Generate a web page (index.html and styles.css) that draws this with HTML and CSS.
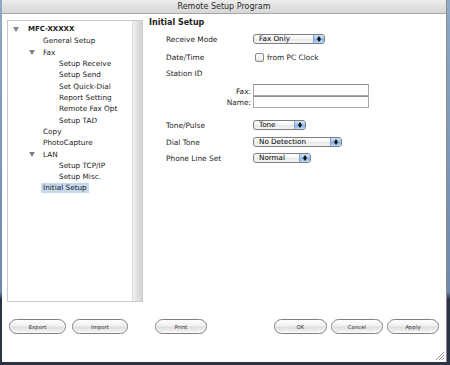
FILE: index.html
```html
<!DOCTYPE html>
<html lang="en">
<head>
  <meta charset="UTF-8" />
  <title>Remote Setup Program</title>
  <link rel="stylesheet" href="styles.css">
</head>
<body>

  <div class="window">
    <div class="titlebar">Remote Setup Program</div>

    <div class="content">
      <div class="tree">
        <div class="tree-list">
          <div class="node l0 bold"><span class="toggle"></span>MFC-XXXXX</div>
          <div class="node l1">General Setup</div>
          <div class="node l1 open"><span class="toggle"></span>Fax</div>
          <div class="node l2">Setup Receive</div>
          <div class="node l2">Setup Send</div>
          <div class="node l2">Set Quick-Dial</div>
          <div class="node l2">Report Setting</div>
          <div class="node l2">Remote Fax Opt</div>
          <div class="node l2">Setup TAD</div>
          <div class="node l1">Copy</div>
          <div class="node l1">PhotoCapture</div>
          <div class="node l1 open"><span class="toggle"></span>LAN</div>
          <div class="node l2">Setup TCP/IP</div>
          <div class="node l2">Setup Misc.</div>
          <div class="node l1 selected"><span>Initial Setup</span></div>
        </div>
        <div class="scrollbar"></div>
      </div>

      <div class="settings">
        <h1>Initial Setup</h1>

        <div class="row r-mode">
          <label>Receive Mode</label>
          <div class="select w-mode"><span>Fax Only</span><i class="arrows"></i></div>
        </div>
        <div class="row r-date">
          <label>Date/Time</label>
          <div class="check"><span class="box"></span>from PC Clock</div>
        </div>
        <div class="row r-station">
          <label>Station ID</label>
        </div>
        <div class="row r-fax">
          <label class="right">Fax:</label>
          <input type="text">
        </div>
        <div class="row r-name">
          <label class="right">Name:</label>
          <input type="text">
        </div>
        <div class="row r-tone">
          <label>Tone/Pulse</label>
          <div class="select w-tone"><span>Tone</span><i class="arrows"></i></div>
        </div>
        <div class="row r-dial">
          <label>Dial Tone</label>
          <div class="select w-dial"><span>No Detection</span><i class="arrows"></i></div>
        </div>
        <div class="row r-line">
          <label>Phone Line Set</label>
          <div class="select w-line"><span>Normal</span><i class="arrows"></i></div>
        </div>
      </div>
    </div>

    <div class="footer">
      <button class="b-export">Export</button>
      <button class="b-import">Import</button>
      <button class="b-print">Print</button>
      <button class="b-ok">OK</button>
      <button class="b-cancel">Cancel</button>
      <button class="b-apply">Apply</button>
    </div>

    <svg class="grip" width="10" height="10" viewBox="0 0 10 10">
      <path d="M9 1 L1 9 M9 4 L4 9 M9 7 L7 9" stroke="#9a9a9a" stroke-width="1" fill="none"/>
    </svg>
  </div>

</body>
</html>
```

FILE: styles.css
```css
* {
  box-sizing: border-box;
}
body {
  margin: 0;
  width: 450px;
  height: 365px;
  overflow: hidden;
  background: linear-gradient(#8ea8c6, #6d88ab 80%, #2c3342 82%);
  font-family: "DejaVu Sans", sans-serif;
  font-size: 7.4px;
  color: #1c1c1c;
}

.window {
  position: relative;
  margin-left: 2px;
  width: 445px;
  height: 362px;
  background: #fff;
  border-right: 1px solid #8c8c8c;
  display: flex;
  flex-direction: column;
}

.titlebar {
  height: 14px;
  line-height: 14px;
  text-align: center;
  font-size: 8px;
  color: #2a2a2a;
  background: linear-gradient(#ececec, #d6d6d6);
  border-bottom: 1px solid #a6a6a6;
}

.content {
  display: flex;
  padding: 6px 0 0 5px;
}

/* tree */
.tree {
  width: 136px;
  height: 282px;
  border: 1px solid #c9c9c9;
  display: flex;
}
.tree-list {
  flex: 1;
  padding-top: 3px;
  font-size: 7.3px;
}
.node {
  height: 11.33px;
  line-height: 11.33px;
  white-space: nowrap;
  display: flex;
  align-items: center;
}
.node.bold {
  font-weight: bold;
  font-size: 7px;
}
.toggle {
  width: 0;
  height: 0;
  border-left: 3px solid transparent;
  border-right: 3px solid transparent;
  border-top: 5px solid #838383;
  margin-right: 9px;
}
.l0 { padding-left: 5px; }
.l1 { padding-left: 35px; }
.l1.open { padding-left: 21px; }
.l1.open .toggle { margin-right: 8px; }
.l2 { padding-left: 51px; }
.selected { padding-left: 33px; }
.selected span {
  background: #c6d8ee;
  padding: 0 2px;
  line-height: 10px;
}
.scrollbar {
  width: 10px;
  background: linear-gradient(to right, #f4f4f4, #e2e2e2 40%, #d4d4d4);
  border-left: 1px solid #dcdcdc;
}

/* settings */
.settings {
  padding-left: 6px;
  flex: 1;
}
h1 {
  margin: -2px 0 2px;
  font-size: 8px;
  line-height: 10px;
  color: #222;
}
.row {
  display: flex;
  align-items: center;
  height: 18px;
}
.row label {
  width: 104px;
  padding-left: 17px;
}
.row label.right {
  text-align: right;
  padding-right: 2px;
}
.r-station { height: 14px; }
.r-fax { height: 16px; align-items: flex-end; }
.r-name { height: 12px; }
.r-tone { margin-top: 8px; }
.r-dial, .r-line { height: 16px; }

input {
  width: 116px;
  height: 12px;
  margin: 0;
  padding: 0;
  border: 1px solid #a9a9a9;
  border-top-color: #8e8e8e;
  background: #fff;
}

.select {
  height: 10px;
  border: 1px solid #7d7d7d;
  border-radius: 3px;
  background: linear-gradient(#ffffff, #f4f4f4 50%, #e6e6e6 51%, #f6f6f6);
  display: flex;
  justify-content: space-between;
  overflow: hidden;
  font-size: 7.2px;
  line-height: 8px;
  color: #000;
}
.select span {
  padding-left: 5px;
}
.w-mode { width: 72px; }
.w-tone { width: 53px; }
.w-dial { width: 89px; }
.w-line { width: 58px; }
.arrows {
  width: 11px;
  border-left: 1px solid #8aa2c8;
  background: linear-gradient(#cfe2f8, #9cc2ef 50%, #7daee9 51%, #c2dcf8);
  position: relative;
}
.arrows::before,
.arrows::after {
  content: "";
  position: absolute;
  left: 3px;
  border-left: 2px solid transparent;
  border-right: 2px solid transparent;
}
.arrows::before {
  top: 1px;
  border-bottom: 3px solid #111;
}
.arrows::after {
  bottom: 1px;
  border-top: 3px solid #111;
}

.check {
  display: flex;
  align-items: center;
  padding-left: 2px;
}
.box {
  width: 9px;
  height: 9px;
  border: 1px solid #8a8a8a;
  border-radius: 2px;
  background: linear-gradient(#fff, #e4e4e4);
  margin-right: 3px;
}

/* buttons */
.footer {
  display: flex;
  padding: 17px 7px 0 7px;
}
button {
  height: 15px;
  width: 56px;
  padding: 0;
  border: 1px solid #7f7f7f;
  border-radius: 8px;
  background: linear-gradient(#ffffff, #f0f0f0 45%, #dedede 55%, #f6f6f6);
  box-shadow: inset 0 0 0 1px #fbfbfb;
  font-family: "DejaVu Sans", sans-serif;
  font-size: 5.4px;
  color: #333;
}
.b-export { width: 57px; }
.b-import { margin-left: 6px; }
.b-print { margin-left: 27px; width: 52px; }
.b-ok { margin-left: auto; width: 53px; }
.b-cancel { margin-left: 4px; width: 52px; }
.b-apply { margin-left: 4px; width: 52px; }

.grip {
  position: absolute;
  right: 1px;
  bottom: 1px;
}
```
